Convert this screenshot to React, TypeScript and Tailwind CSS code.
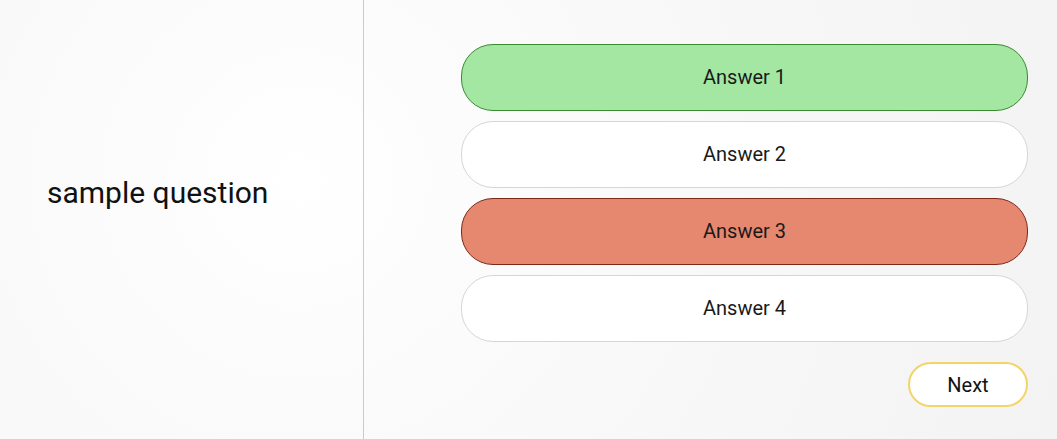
const answers = [
  { label: "Answer 1", state: "correct" },
  { label: "Answer 2", state: "idle" },
  { label: "Answer 3", state: "wrong" },
  { label: "Answer 4", state: "idle" }
];

function AnswerButton({ label, state }: { label: string; state: string }) {
  const tone =
    state === "correct"
      ? "bg-[#a3e7a3] border-[#3b8a33]"
      : state === "wrong"
        ? "bg-[#e6886f] border-[#7b2a18]"
        : "bg-white border-[#d6d6d6]";
  return (
    <button
      className={`h-[67px] w-full rounded-[32px] border pb-[2px] text-[20px] text-[#1a1a1a] ${tone}`}
    >
      {label}
    </button>
  );
}

export default function App() {
  return (
    <div
      className="flex h-[439px] w-[1057px] bg-[radial-gradient(circle_at_300px_180px,#ffffff_0%,#fafafa_35%,#f3f3f3_100%)] font-['Roboto',sans-serif]"
    >
      <div className="flex w-[364px] shrink-0 items-center border-r border-[#cbcbcb] pb-[54px] pl-[47px]">
        <h1 className="text-[30px] text-[#111]">sample question</h1>
      </div>
      <div className="flex flex-1 flex-col pt-[44px] pl-[97px] pr-[29px]">
        <div className="flex flex-col gap-[10px]">
          {answers.map((a) => (
            <AnswerButton key={a.label} label={a.label} state={a.state} />
          ))}
        </div>
        <div className="mt-[20px] flex justify-end">
          <button className="h-[45px] w-[120px] rounded-full border-2 border-[#f3d469] bg-white text-[20px] text-[#111]">
            Next
          </button>
        </div>
      </div>
    </div>
  );
}
